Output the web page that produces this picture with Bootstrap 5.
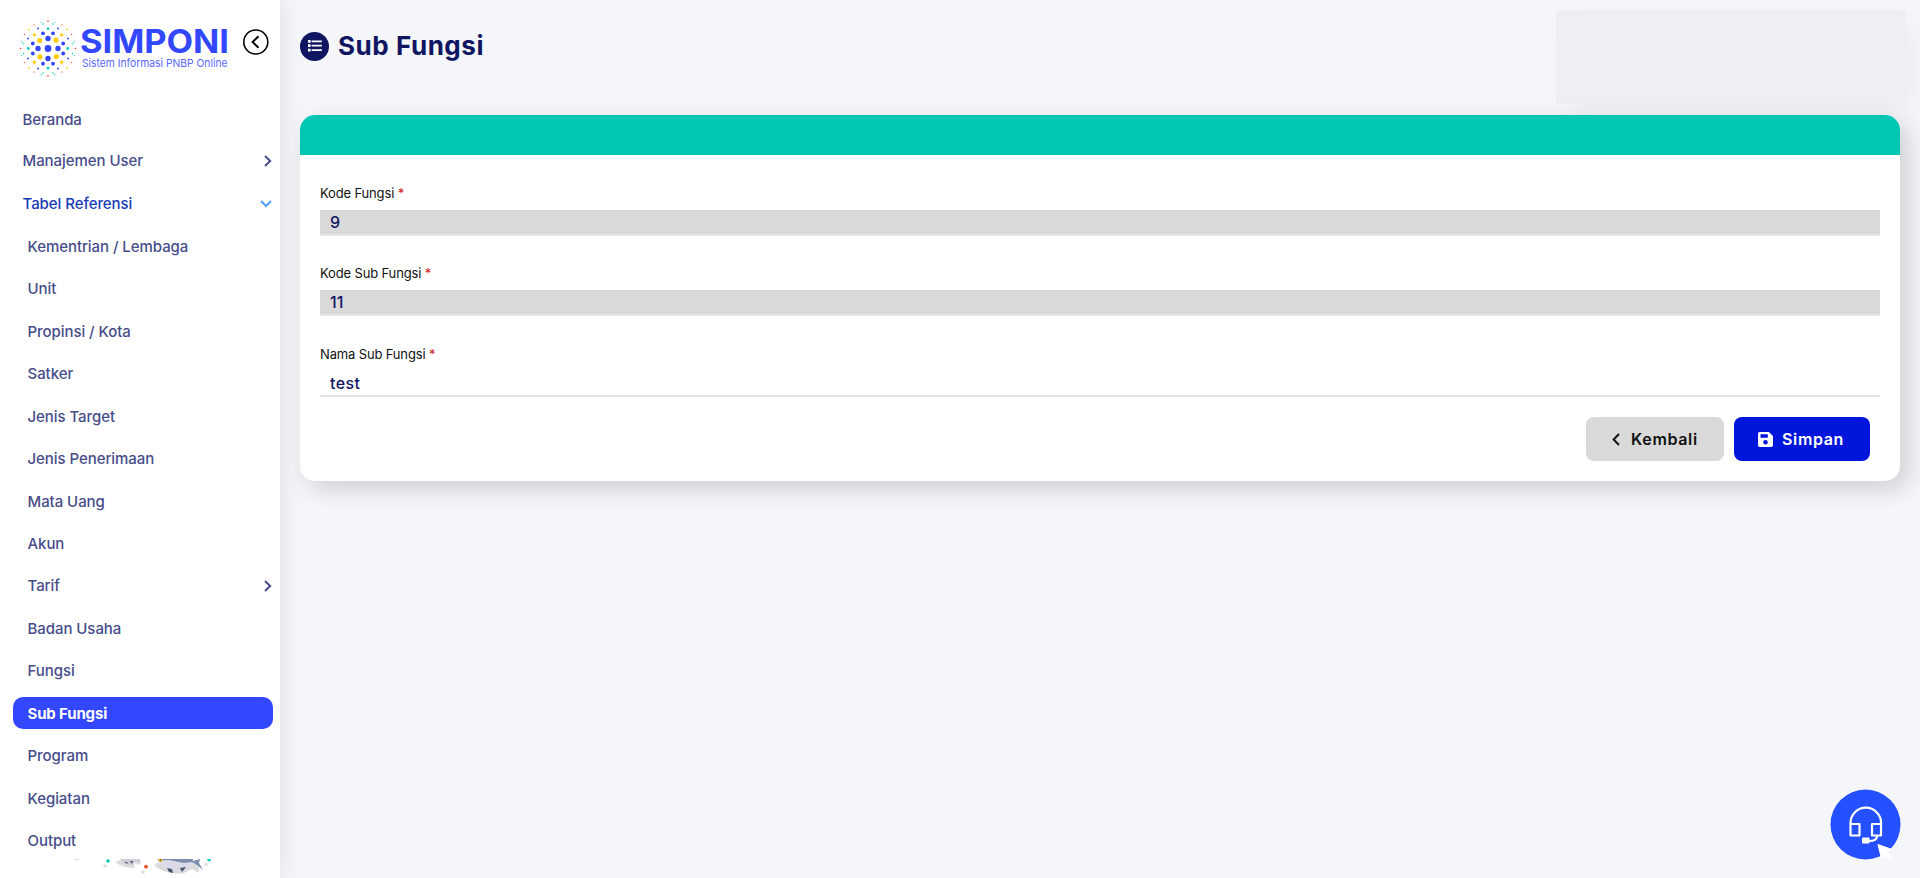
<!DOCTYPE html>
<html lang="id">
<head>
<meta charset="utf-8">
<meta name="viewport" content="width=device-width, initial-scale=1">
<title>SIMPONI - Sub Fungsi</title>
<link href="https://cdn.jsdelivr.net/npm/bootstrap@5.3.0/dist/css/bootstrap.min.css" rel="stylesheet">
<style>
body{background:#f4f6fa;font-family:"Inter","Liberation Sans",sans-serif;height:100vh;overflow:hidden}
.sidebar{width:280px;height:100vh;background:#fff;box-shadow:0 0 25px rgba(0,0,0,.1);z-index:2}
.brand-row{height:102.6px;padding:17px 11px 0 18px}
.menu .nav-link{height:32px;margin:0 7px 10.46px 13px;padding:0 0 0 14.5px;color:#474d8a;font-size:15px;font-weight:500;line-height:33.4px;letter-spacing:-.06px;white-space:nowrap;border-radius:10px}
.menu .top-item{padding-left:9.5px}
.menu .nav-link.open-item{color:#183bb8}
.menu .nav-link.active{background:#3347ff;color:#fff;font-weight:700;letter-spacing:-.15px}
.menu svg{margin-right:1px}
.footer-art{height:19px;bottom:0;left:60px}
.heading-row{height:115px;padding:32px 14px 0 0}
.page-title{font-size:26px;font-weight:700;color:#0f1560;line-height:28px;letter-spacing:.55px;margin-left:9px}
.user-panel{width:350px;height:94px;margin-top:-22px;margin-right:-20px;background:#eeeff3;box-shadow:10px 10px 25px -8px rgba(0,0,0,.06)}
.form-card{border:0;border-radius:15px;box-shadow:8px 8px 25px rgba(0,0,0,.16);height:366px}
.form-card .card-header{height:40px;background:#00c6b3;border:0;border-radius:15px 15px 0 0}
.form-card .card-body{padding:27px 20px 20px}
.field{height:80px}
.field-last{height:81px;padding-top:1px}
.field label{display:block;height:28px;line-height:22px;font-size:13px;color:#111;letter-spacing:-.15px}
.field label span{color:#cf1717}
.field .form-control{height:26px;border:0;border-bottom:2px solid #e5e5ec;border-radius:0;padding:0 10px;font-size:16px;font-weight:500;line-height:24px;color:#111763;background:#fff}
.field .form-control:disabled{background:#d9d9d9;background-clip:padding-box;opacity:1}
.field-last .form-control{letter-spacing:.4px}
.actions{gap:10px;margin:-6px 10px 0 0}
.actions .btn{height:44px;border:0;border-radius:8px;font-size:16px;font-weight:600;letter-spacing:.65px;padding:0;display:flex;align-items:center}
.btn-back{width:138px;background:#d9d9d9;color:#111}
.btn-save{width:136px;background:#0015dc;color:#fff}
.help-fab{right:19.5px;bottom:18.5px;width:71px;height:71px}
svg text{font-family:"Inter",sans-serif}
</style>
</head>
<body class="d-flex">
<aside class="sidebar position-relative flex-shrink-0">
  <div class="brand-row d-flex">
    <svg width="212" height="64" viewBox="18 17 212 64">
      <defs>
        <g id="quad">
          <circle cy="-10" r="2.7" fill="#3347ff"/><circle cx="8" cy="-8.3" r="2.6" fill="#ffcc08"/>
          <g fill="#3347ff"><circle cx="-5" cy="-15.2" r="1.9"/><circle cx="5" cy="-15.2" r="1.9"/><circle cx="-10" cy="-20" r=".95"/><circle cx="10" cy="-20" r=".95"/></g>
          <circle cx="13.7" cy="-13.7" r="1.6" fill="#ffcc08"/><circle cx="19" cy="-19.2" r=".85" fill="#ffcc08"/>
          <g fill="#08d3bd"><circle cy="-19.7" r="1.4"/><circle cx="-5" cy="-24.5" r=".8"/><circle cx="5" cy="-24.5" r=".8"/><circle cx="-6.8" cy="-26.2" r=".6"/><circle cx="6.8" cy="-26.2" r=".6"/></g>
          <g fill="#e8593b"><circle cy="-27.4" r=".85"/><circle cx="-14" cy="-23.6" r=".7"/><circle cx="14" cy="-23.6" r=".7"/></g>
        </g>
      </defs>
      <g transform="translate(48 48.5)"><circle r="3.4" fill="#3347ff"/><use href="#quad"/><use href="#quad" transform="rotate(90)"/><use href="#quad" transform="rotate(180)"/><use href="#quad" transform="rotate(270)"/></g>
      <text x="80" y="52.5" font-size="32" font-weight="700" fill="#3347ff" textLength="149" lengthAdjust="spacingAndGlyphs">SIMPONI</text>
      <text x="82" y="67.3" font-size="11" fill="#5869ff" textLength="145.5" lengthAdjust="spacingAndGlyphs">Sistem Informasi PNBP Online</text>
    </svg>
    <svg class="ms-auto mt-2 pt-1" width="26" height="30" viewBox="0 0 26 26" fill="none" stroke="#000"><circle cx="12.8" cy="13" r="12" stroke-width="1.6"/><path d="M15.5 7.2 9.6 13l5.9 5.8" stroke-width="1.9"/></svg>
  </div>
  <nav class="menu nav flex-column flex-nowrap">
    <a class="nav-link top-item">Beranda</a>
    <a class="nav-link top-item d-flex align-items-center justify-content-between"><span>Manajemen User</span><svg width="8" height="12" viewBox="0 0 8 12" fill="none" stroke="#474d8a" stroke-width="2"><path d="m1 1 5.2 5L1 11"/></svg></a>
    <a class="nav-link top-item open-item d-flex align-items-center justify-content-between"><span>Tabel Referensi</span><svg width="12" height="8" viewBox="0 0 12 8" fill="none" stroke="#4e9dff" stroke-width="2"><path d="m1 1 5 5 5-5"/></svg></a>
    <a class="nav-link">Kementrian / Lembaga</a>
    <a class="nav-link">Unit</a>
    <a class="nav-link">Propinsi / Kota</a>
    <a class="nav-link">Satker</a>
    <a class="nav-link">Jenis Target</a>
    <a class="nav-link">Jenis Penerimaan</a>
    <a class="nav-link">Mata Uang</a>
    <a class="nav-link">Akun</a>
    <a class="nav-link d-flex align-items-center justify-content-between"><span>Tarif</span><svg width="8" height="12" viewBox="0 0 8 12" fill="none" stroke="#474d8a" stroke-width="2"><path d="m1 1 5.2 5L1 11"/></svg></a>
    <a class="nav-link">Badan Usaha</a>
    <a class="nav-link">Fungsi</a>
    <a class="nav-link active">Sub Fungsi</a>
    <a class="nav-link">Program</a>
    <a class="nav-link">Kegiatan</a>
    <a class="nav-link">Output</a>
  </nav>
  <svg class="footer-art position-absolute" width="170" height="19" viewBox="0 9 170 19">
    <g fill="#dcdcde"><path d="M14 9h5q-2 3-5 0"/><circle cx="45" cy="16" r="1.7"/><circle cx="83" cy="22" r="1.8"/><circle cx="146" cy="14.5" r="1.7"/><path d="M55 12q5-2 8-3h17l-1 6-4-2-1 5-9-1q-5-1-10-5M94 15l7-4 14 5 23-6 1 13-7-4-10 5-11-1q-11-2-17-8"/></g>
    <path d="M60 9h20l1 5-5-3-5 4-6-1z" fill="#cfccda"/>
    <path d="M97 9h36q1 8-7 12-15 2-25-6z" fill="#dbdce8"/>
    <path d="M97 9h36v2l7-2-1 4 4 7-6-5-5-3-8 1-15-3q-8 1-12-1z" fill="#7d8fb0"/>
    <g fill="#465369"><path d="m107 18 5 1 1 4-4-1zM120 18l6-1-4 5zM64 12l3 0 1 2zM70 11l3 0-1 3z"/></g>
    <circle cx="100.5" cy="10" r="2" fill="#eeb927"/><circle cx="100.5" cy="10" r=".8" fill="#4d4534"/>
    <circle cx="48" cy="11" r="1.8" fill="#08c8b3"/><circle cx="149" cy="9.8" r="1.8" fill="#08c8b3"/><circle cx="86" cy="16.7" r="1.9" fill="#ed5231"/>
  </svg>
</aside>
<main class="flex-grow-1" style="padding:0 20px">
  <header class="heading-row d-flex align-items-start">
    <svg width="29" height="29" viewBox="0 0 29 29"><circle cx="14.5" cy="14.5" r="14.5" fill="#0f1560"/><g fill="#fff"><path d="M8 8h2.6v2.8H8zM8 12.3h2.6v2.8H8zM8 16.8h2.6v2.8H8z"/><path d="M11.6 8.5h10.2v1.8H11.6zM11.6 12.8h10.2v1.8H11.6zM11.6 17.2h10.2V19H11.6z"/></g></svg>
    <h1 class="page-title mb-0">Sub Fungsi</h1>
    <div class="user-panel ms-auto"></div>
  </header>
  <section class="card form-card">
    <div class="card-header"></div>
    <form class="card-body">
      <div class="field"><label for="kf">Kode Fungsi <span>*</span></label><input id="kf" class="form-control" value="9" disabled></div>
      <div class="field"><label for="ks">Kode Sub Fungsi <span>*</span></label><input id="ks" class="form-control" value="11" disabled></div>
      <div class="field field-last"><label for="ns">Nama Sub Fungsi <span>*</span></label><input id="ns" class="form-control" value="test"></div>
      <div class="actions d-flex justify-content-end">
        <button type="button" class="btn btn-back"><svg style="margin:0 11px 0 26px" width="8" height="13" viewBox="0 0 8 13" fill="none" stroke="#111" stroke-width="2"><path d="M7 1 1.6 6.5 7 12"/></svg><span>Kembali</span></button>
        <button type="button" class="btn btn-save"><svg style="margin:0 9px 0 24px" width="15" height="15" viewBox="0 0 15 15"><path fill="#fff" fill-rule="evenodd" d="M1.7 0h9.2L15 4v9.3q0 1.7-1.7 1.7H1.7Q0 15 0 13.3V1.7Q0 0 1.7 0zM2.5 2.2v3.6h7.3V2.2zM7.5 8a2.3 2.3 0 1 0 0 4.6 2.3 2.3 0 0 0 0-4.6z"/></svg><span>Simpan</span></button>
      </div>
    </form>
  </section>
</main>
<a class="help-fab position-fixed">
  <svg class="d-block" width="71" height="71" viewBox="0 0 71 71"><circle cx="35.5" cy="35.5" r="35" fill="#2450ff"/>
  <g fill="none" stroke="#fff" stroke-width="2.2" stroke-linejoin="round"><path d="M20.5 36V34a15.3 15.3 0 0 1 30.6 0v2M20.5 35h9v11.5h-9zM42 35h9v11.5h-9zM47 47q0 5-8 5"/></g>
  <rect x="32" y="48.5" width="7.5" height="6" rx="1" fill="#fff"/><path d="m48 55.5 14 5-5 2.7 4.5 4.7-2.7 2.5-4.8-4.7-2.5 4z" fill="#fff" stroke="#fff" stroke-linejoin="round"/></svg>
</a>
<script src="https://cdn.jsdelivr.net/npm/bootstrap@5.3.0/dist/js/bootstrap.bundle.min.js"></script>
</body>
</html>
